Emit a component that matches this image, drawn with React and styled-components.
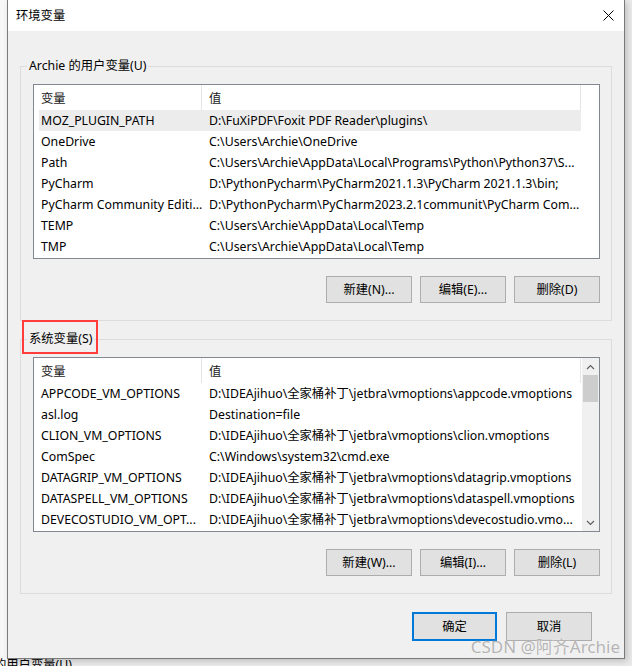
import React from "react";
import styled, { createGlobalStyle } from "styled-components";

const userVars = [
  ["MOZ_PLUGIN_PATH", "D:\\FuXiPDF\\Foxit PDF Reader\\plugins\\"],
  ["OneDrive", "C:\\Users\\Archie\\OneDrive"],
  ["Path", "C:\\Users\\Archie\\AppData\\Local\\Programs\\Python\\Python37\\S..."],
  ["PyCharm", "D:\\PythonPycharm\\PyCharm2021.1.3\\PyCharm 2021.1.3\\bin;"],
  ["PyCharm Community Editi...", "D:\\PythonPycharm\\PyCharm2023.2.1communit\\PyCharm Com..."],
  ["TEMP", "C:\\Users\\Archie\\AppData\\Local\\Temp"],
  ["TMP", "C:\\Users\\Archie\\AppData\\Local\\Temp"],
];

const sysVars = [
  ["APPCODE_VM_OPTIONS", "D:\\IDEAjihuo\\全家桶补丁\\jetbra\\vmoptions\\appcode.vmoptions"],
  ["asl.log", "Destination=file"],
  ["CLION_VM_OPTIONS", "D:\\IDEAjihuo\\全家桶补丁\\jetbra\\vmoptions\\clion.vmoptions"],
  ["ComSpec", "C:\\Windows\\system32\\cmd.exe"],
  ["DATAGRIP_VM_OPTIONS", "D:\\IDEAjihuo\\全家桶补丁\\jetbra\\vmoptions\\datagrip.vmoptions"],
  ["DATASPELL_VM_OPTIONS", "D:\\IDEAjihuo\\全家桶补丁\\jetbra\\vmoptions\\dataspell.vmoptions"],
  ["DEVECOSTUDIO_VM_OPT...", "D:\\IDEAjihuo\\全家桶补丁\\jetbra\\vmoptions\\devecostudio.vmo..."],
];

function VarList({ rows, selected, scroll }) {
  return (
    <ListBox>
      <ListBody>
        <HeaderRow>
          <HeadCell $first>变量</HeadCell>
          <HeadCell>值</HeadCell>
        </HeaderRow>
        {rows.map(([name, value], i) => (
          <Row key={name} $selected={i === selected}>
            <Cell $first>{name}</Cell>
            <Cell>{value}</Cell>
          </Row>
        ))}
      </ListBody>
      {scroll && (
        <ScrollBar>
          <Arrow>
            <svg width="9" height="6" viewBox="0 0 9 6">
              <polyline points="1,5 4.5,1.5 8,5" fill="none" stroke="#606060" strokeWidth="1.2" />
            </svg>
          </Arrow>
          <Thumb />
          <Track />
          <Arrow>
            <svg width="9" height="6" viewBox="0 0 9 6">
              <polyline points="1,1 4.5,4.5 8,1" fill="none" stroke="#606060" strokeWidth="1.2" />
            </svg>
          </Arrow>
        </ScrollBar>
      )}
    </ListBox>
  );
}

export default function App() {
  return (
    <Screen>
      <GlobalStyle />
      <Dialog>
        <TitleBar>
          <Title>环境变量</Title>
          <CloseBtn>
            <svg width="11" height="11" viewBox="0 0 11 11">
              <path d="M0.5 0.5 L10.5 10.5 M10.5 0.5 L0.5 10.5" stroke="#000" strokeWidth="1" />
            </svg>
          </CloseBtn>
        </TitleBar>
        <Body>
          <Group>
            <Caption>Archie 的用户变量(U)</Caption>
            <VarList rows={userVars} selected={0} />
            <ButtonRow>
              <Button>新建(N)...</Button>
              <Button>编辑(E)...</Button>
              <Button>删除(D)</Button>
            </ButtonRow>
          </Group>
          <Group $second>
            <Caption $marked>系统变量(S)</Caption>
            <VarList rows={sysVars} scroll />
            <ButtonRow>
              <Button>新建(W)...</Button>
              <Button>编辑(I)...</Button>
              <Button>删除(L)</Button>
            </ButtonRow>
          </Group>
          <Footer>
            <Button $primary $w={85} $h={29}>确定</Button>
            <Button $w={86} $h={29}>取消</Button>
          </Footer>
        </Body>
        <Watermark>CSDN @阿齐Archie</Watermark>
      </Dialog>
      <BehindText>的用户变量(U)</BehindText>
    </Screen>
  );
}

const GlobalStyle = createGlobalStyle`
  html, body {
    margin: 0;
    padding: 0;
  }
  body {
    width: 632px;
    height: 666px;
    overflow: hidden;
    background: #e4e4e4;
    font-family: "Noto Sans", "Noto Sans CJK SC", sans-serif;
    font-size: 12.3px;
    color: #000;
  }
  * {
    box-sizing: border-box;
  }
`;

const Screen = styled.div`
  width: 632px;
  height: 666px;
  padding-left: 7px;
  display: flex;
  flex-direction: column;
  overflow: hidden;
  background: linear-gradient(to right, #f7f7f7 0 7px, #e9e9e9 7px);
`;

const Dialog = styled.div`
  position: relative;
  width: 618px;
  height: 659px;
  flex: none;
  border: 1px solid #7a7a7a;
  border-top: none;
  background: #f0f0f0;
  display: flex;
  flex-direction: column;
  box-shadow: 2px 2px 6px rgba(0, 0, 0, 0.18);
`;

const TitleBar = styled.div`
  height: 31px;
  background: #fff;
  display: flex;
  align-items: center;
  padding-left: 8px;
`;

const Title = styled.div`
  flex: 1;
  line-height: 16px;
`;

const CloseBtn = styled.div`
  width: 32px;
  height: 31px;
  display: grid;
  place-items: center;
`;

const Body = styled.div`
  flex: 1;
  padding: 26px 12px 0 12px;
  display: flex;
  flex-direction: column;
`;

const Group = styled.fieldset`
  margin: ${(p) => (p.$second ? "9px" : "0")} 0 0 0;
  padding: 9px 11px 17px 12px;
  border: 1px solid #dcdcdc;
  min-width: 0;
`;

const Caption = styled.legend`
  position: relative;
  margin-left: -6px;
  padding: 0 2px;
  line-height: 18px;

  ${(p) =>
    p.$marked &&
    `
    &::after {
      content: "";
      position: absolute;
      left: -5px;
      right: -4px;
      top: -10px;
      bottom: -6px;
      border: 2px solid #ff3b3b;
    }
  `}
`;

const ListBox = styled.div`
  height: 175px;
  border: 1px solid #828790;
  background: #fff;
  display: flex;
`;

const ListBody = styled.div`
  flex: 1;
  padding-left: 5px;
  overflow: hidden;
`;

const HeaderRow = styled.div`
  display: flex;
  height: 25px;
`;

const HeadCell = styled.div`
  width: ${(p) => (p.$first ? "163px" : "379px")};
  padding-left: ${(p) => (p.$first ? "2px" : "7px")};
  border-right: 1px solid #e5e5e5;
  display: flex;
  align-items: center;
  white-space: nowrap;
  color: #1a1a1a;
`;

const Row = styled.div`
  display: flex;
  width: 542px;
  height: 21px;
  align-items: center;
  background: ${(p) => (p.$selected ? "#ececec" : "transparent")};
`;

const Cell = styled.div`
  width: ${(p) => (p.$first ? "163px" : "379px")};
  padding-left: ${(p) => (p.$first ? "2px" : "7px")};
  white-space: nowrap;
  overflow: hidden;
  line-height: 16px;
`;

const ScrollBar = styled.div`
  width: 17px;
  background: #f0f0f0;
  display: flex;
  flex-direction: column;
`;

const Arrow = styled.div`
  height: 17px;
  display: grid;
  place-items: center;
`;

const Thumb = styled.div`
  height: 27px;
  margin: 0 1px;
  background: #cdcdcd;
`;

const Track = styled.div`
  flex: 1;
`;

const ButtonRow = styled.div`
  display: flex;
  justify-content: flex-end;
  gap: 8px;
  margin-top: 17px;
`;

const Button = styled.div`
  width: ${(p) => p.$w || 86}px;
  height: ${(p) => p.$h || 27}px;
  background: #e1e1e1;
  border: ${(p) => (p.$primary ? "2px solid #0078d7" : "1px solid #adadad")};
  display: flex;
  align-items: center;
  justify-content: center;
  line-height: 16px;
  white-space: nowrap;
`;

const Footer = styled.div`
  display: flex;
  justify-content: flex-end;
  gap: 9px;
  margin-top: 18px;
  padding-right: 20px;
`;

const Watermark = styled.div`
  position: absolute;
  right: 4px;
  bottom: 0;
  font-size: 17px;
  line-height: 23px;
  color: #b4b4b4;
  text-shadow: 0 0 1px #fff;
  white-space: nowrap;
`;

const BehindText = styled.div`
  margin-left: -13px;
  margin-top: -2px;
  line-height: 16px;
  white-space: nowrap;
`;
